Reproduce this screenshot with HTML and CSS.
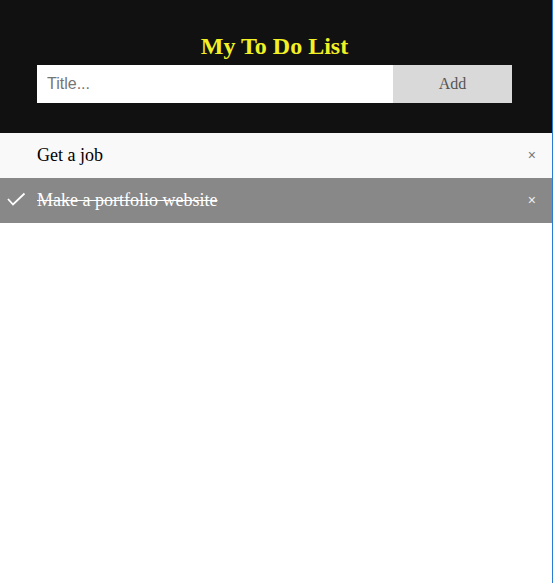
FILE: index.html
```html
<!DOCTYPE html>
<html>
<head>
<meta charset="utf-8">
<link rel="stylesheet" href="styles.css">
</head>
<body>
<div class="page">
  <div class="header">
    <h2 class="title">My To Do List</h2>
    <div class="add-row">
      <input class="title-input" type="text" placeholder="Title...">
      <span class="add-btn">Add</span>
    </div>
  </div>
  <ul class="todo-list">
    <li class="todo-item">Get a job<span class="close">×</span></li>
    <li class="todo-item checked"><svg class="check" width="20" height="16" viewBox="0 0 20 16"><polyline points="1,7 6,12.5 17.5,1.5" fill="none" stroke="#fff" stroke-width="1.8"/></svg>Make a portfolio website<span class="close">×</span></li>
  </ul>
</div>
</body>
</html>
```
FILE: styles.css
```css
html, body {
  margin: 0;
  padding: 0;
  background: #fff;
}
.page {
  min-height: 583px;
  box-sizing: border-box;
  border-right: 1px solid #2a7bd4;
  font-family: "Liberation Serif", "Times New Roman", serif;
}
.header {
  background: #111111;
  padding: 32px 40px 30px 37px;
  text-align: center;
}
.title {
  margin: 0 0 5px 0;
  font-size: 24px;
  line-height: 28px;
  font-weight: bold;
  color: #f1f125;
}
.add-row {
  display: flex;
  height: 38px;
}
.title-input {
  width: 356px;
  height: 38px;
  box-sizing: border-box;
  margin: 0;
  border: none;
  border-radius: 0;
  padding: 0 10px;
  font-family: "Liberation Sans", Arial, sans-serif;
  font-size: 16px;
  outline: none;
  background: #fff;
}
.title-input::placeholder {
  color: #757575;
}
.add-btn {
  flex: 1;
  background: #d9d9d9;
  color: #555;
  font-size: 16px;
  display: flex;
  align-items: center;
  justify-content: center;
}
.todo-list {
  list-style: none;
  margin: 0;
  padding: 0;
}
.todo-item {
  position: relative;
  padding: 12px 8px 12px 37px;
  font-size: 18px;
  line-height: 21px;
  background: #f9f9f9;
  color: #000;
}
.todo-item.checked {
  background: #888888;
  color: #fff;
  text-decoration: line-through;
}
.check {
  position: absolute;
  left: 7px;
  top: 14px;
}
.close {
  position: absolute;
  right: 16px;
  top: 12px;
  font-family: "Liberation Sans", Arial, sans-serif;
  font-size: 14px;
  line-height: 21px;
  color: #777;
  text-decoration: none;
}
.checked .close {
  color: #eee;
}
```
